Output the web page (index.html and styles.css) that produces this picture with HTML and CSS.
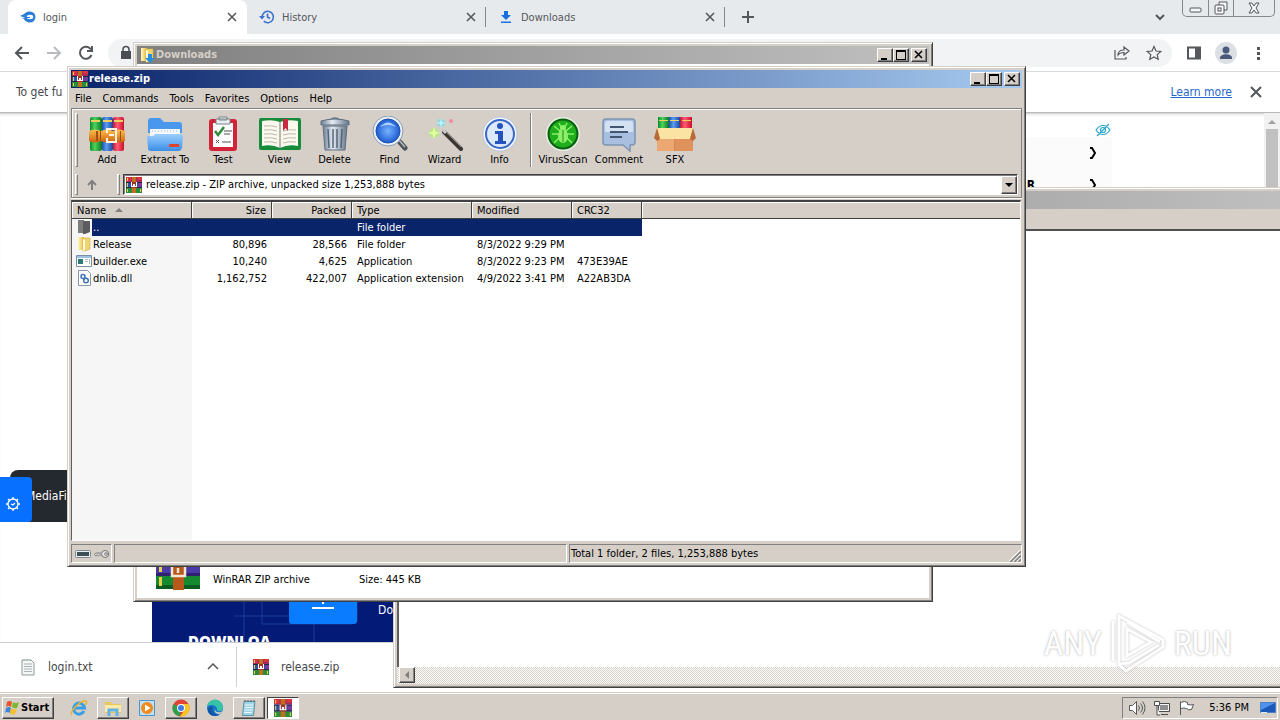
FILE: index.html
```html
<!DOCTYPE html>
<html lang="en">
<head>
    <meta charset="UTF-8">
    <meta name="viewport" content="width=device-width, initial-scale=1.0">
    <title>release.zip</title>
    <link rel="stylesheet" href="styles.css">
</head>
<body>
    <!-- Shared icons -->
    <svg class="defs" aria-hidden="true">
        <defs>
            <linearGradient id="book-green" x2="1" y2="0"><stop offset="0" stop-color="#0a8a2e"/><stop offset=".4" stop-color="#4fd35a"/><stop offset="1" stop-color="#08762a"/></linearGradient>
            <linearGradient id="book-blue" x2="1" y2="0"><stop offset="0" stop-color="#1d50b0"/><stop offset=".4" stop-color="#5c9df0"/><stop offset="1" stop-color="#1746a0"/></linearGradient>
            <linearGradient id="book-red" x2="1" y2="0"><stop offset="0" stop-color="#c31735"/><stop offset=".4" stop-color="#ff5c73"/><stop offset="1" stop-color="#c80f2c"/></linearGradient>
            <linearGradient id="belt" x2="0" y2="1"><stop offset="0" stop-color="#ffc04e"/><stop offset="1" stop-color="#cc6410"/></linearGradient>
            <linearGradient id="folder-blue" x2="0" y2="1"><stop offset="0" stop-color="#9ccffc"/><stop offset="1" stop-color="#3b8ee8"/></linearGradient>
            <linearGradient id="steel" x2="1" y2="0"><stop offset="0" stop-color="#6e7f93"/><stop offset=".4" stop-color="#e4ebf2"/><stop offset="1" stop-color="#66778b"/></linearGradient>
            <linearGradient id="paper" x2="1" y2="0"><stop offset="0" stop-color="#fff7c4"/><stop offset="1" stop-color="#e8b93a"/></linearGradient>
            <radialGradient id="lens"><stop offset="0" stop-color="#78b4ff"/><stop offset="1" stop-color="#1e5bd0"/></radialGradient>
            <symbol id="rar" viewBox="0 0 16 16">
                <path fill="#a82a5e" d="M0 0h16v5H0z"/><path fill="#d8323c" d="M0 0h5v4H0zM11 0h5v3h-5z"/>
                <path fill="#2f4fa8" d="M0 5h16v6H0z"/><path fill="#7a3a9c" d="M12 5h4v5h-4z"/>
                <path fill="#2c8a3c" d="M0 11h16v5H0z"/>
                <path fill="#222a44" d="M0 5h16v1H0zM0 10h16v1H0z"/>
                <path fill="#efd04a" d="M1 1h1v3H1zM1 6h1v4H1zM1 12h1v3H1zM14 12h1v3h-1z"/>
                <path fill="#c3701c" d="M6 0h4v5H6zM6 11h4v5H6z"/>
                <path fill="#9a3424" d="M5 5h6v6H5z"/>
                <path fill="#fff" d="M5 5h1v4h1V7h2v2h1V5h1v5H5z"/>
            </symbol>
            <symbol id="folder" viewBox="0 0 16 16">
                <path fill="url(#paper)" d="M2 1h6v13H2z"/>
                <path fill="#f1d472" stroke="#d4ac3c" stroke-width=".6" d="M7 2h7v11l-5 2H7z"/>
                <path fill="#fffbe0" d="M7 3l2 1v10l-2 1z"/>
            </symbol>
        </defs>
    </svg>

    <div class="desktop">
        <!-- Browser -->
        <div class="browser">
            <header class="tabstrip">
                <div class="tab active">
                    <svg class="favicon" viewBox="0 0 16 16"><path fill="#2a7fd6" d="M0 7c1-1 3-1 4-2 2-2 4-2.500 6-2.500a5.500 5.500 0 0 1 0 11c-3 0-5-1.500-6-3.500L1 9.500c2 0 3-.3 4-.8L0 7z"/><ellipse cx="10" cy="8" rx="3.200" ry="2.200" fill="#fff"/><path fill="#2a7fd6" d="M6 8h4a2 2 0 0 1 0 1H6z"/></svg>
                    <span>login</span>
                    <button class="icon-btn" aria-label="Close login"><svg viewBox="0 0 16 16"><path d="M4 4l8 8M12 4l-8 8"/></svg></button>
                </div>
                <div class="tab">
                    <svg class="favicon" viewBox="0 0 16 16"><path fill="none" stroke="#3b72cf" stroke-width="1.600" d="M3 8a5.700 5.700 0 1 1 1.800 4.200M8.500 4.500V8l2.500 1.500"/><path fill="#3b72cf" d="M0 7h6L3 10.500z"/></svg>
                    <span>History</span>
                    <button class="icon-btn" aria-label="Close History"><svg viewBox="0 0 16 16"><path d="M4 4l8 8M12 4l-8 8"/></svg></button>
                </div>
                <div class="tab">
                    <svg class="favicon" viewBox="0 0 16 16"><path fill="#1a6fe0" d="M6 2h4v4h3l-5 5-5-5h3zM3 12.500h10V14H3z"/></svg>
                    <span>Downloads</span>
                    <button class="icon-btn" aria-label="Close Downloads"><svg viewBox="0 0 16 16"><path d="M4 4l8 8M12 4l-8 8"/></svg></button>
                </div>
                <button class="icon-btn new-tab" aria-label="New tab"><svg viewBox="0 0 16 16"><path d="M8 2v12M2 8h12"/></svg></button>
                <button class="icon-btn tab-search" aria-label="Search tabs"><svg viewBox="0 0 16 16"><path d="M4 6l4 4 4-4"/></svg></button>
                <div class="caption">
                    <button aria-label="Minimize"><svg viewBox="0 0 20 16"><rect x="4" y="8" width="11" height="4" rx="1"/></svg></button>
                    <button aria-label="Restore"><svg viewBox="0 0 20 16"><path d="M8 5V2h8v8h-3"/><rect x="4" y="5" width="9" height="9" rx="1"/><rect x="7" y="8" width="3" height="3"/></svg></button>
                    <button class="wide" aria-label="Close"><svg viewBox="0 0 20 16"><path d="M5 3h3l2 3 2-3h3l-3 5 3 5h-3l-2-3-2 3H5l3-5z"/></svg></button>
                </div>
            </header>
            <div class="toolbar">
                <button class="icon-btn" aria-label="Back"><svg viewBox="0 0 16 16"><path d="M15 8H2M8 2L2 8l6 6"/></svg></button>
                <button class="icon-btn dim" aria-label="Forward"><svg viewBox="0 0 16 16"><path d="M1 8h13M8 2l6 6-6 6"/></svg></button>
                <button class="icon-btn" aria-label="Reload"><svg viewBox="0 0 16 16"><path d="M13.500 10A6 6 0 1 1 13 4.500M14 1v5H9"/></svg></button>
                <div class="omnibox">
                    <svg class="lock" viewBox="0 0 12 16"><path fill="#4a4d52" d="M1 6h10v8H1z"/><path fill="none" stroke="#4a4d52" stroke-width="1.500" d="M3 7V4.500a3 3 0 0 1 6 0V7"/></svg>
                    <input type="text" aria-label="Address">
                    <button class="icon-btn thin" aria-label="Share"><svg viewBox="0 0 16 16"><path d="M1 5v9h11v-2M4 10c0-4 3-5 6-5V2l5 4-5 4V7.500C7 7.500 5.500 8 4 10z"/></svg></button>
                    <button class="icon-btn thin" aria-label="Bookmark"><svg viewBox="0 0 16 16"><path d="M8 1.500l2 4.500 4.800.4-3.600 3.200 1 4.800L8 12l-4.200 2.400 1-4.800L1.200 6.400 6 6z"/></svg></button>
                </div>
                <button class="icon-btn" aria-label="Side panel"><svg viewBox="0 0 16 16"><path d="M2 2.500h12v11H2z"/><path fill="#54575b" stroke="none" d="M9 2h5v12H9z"/></svg></button>
                <button class="avatar" aria-label="Profile"><svg viewBox="0 0 22 22"><circle cx="11" cy="8" r="3.500"/><path d="M5 16c0-5 12-5 12 0v1H5z"/></svg></button>
                <button class="icon-btn" aria-label="Menu"><svg viewBox="0 0 16 16"><path fill="#54575b" stroke="none" d="M7 2h3v3H7zM7 7h3v3H7zM7 12h3v3H7z"/></svg></button>
            </div>
            <div class="infobar">
                <span>To get fu</span>
                <a href="#">Learn more</a>
                <button class="icon-btn" aria-label="Dismiss"><svg viewBox="0 0 16 16"><path d="M3 3l10 10M13 3L3 13"/></svg></button>
            </div>
            <main class="page">
                <div class="page-body">
                    <div class="sponsor">
                        <svg class="eye" viewBox="0 0 18 14"><path d="M2 7c4-6 10-6 14 0-4 6-10 6-14 0zM3 13L15 1"/><circle cx="9" cy="7" r="2.500"/></svg>
                        <div class="links">
                            <p><svg viewBox="0 0 8 12"><path d="M1 1h2l3 5-3 5H1"/></svg></p>
                            <p><b>R</b><svg viewBox="0 0 8 12"><path d="M1 1h2l3 5-3 5H1"/></svg></p>
                        </div>
                    </div>
                    <div class="banner">
                        <svg class="circuit" viewBox="0 0 241 60"><path d="M92 0v60M110 0v42h30M82 34h80l12-10V0M205 0v40M162 42v18M140 42h60"/></svg>
                        <svg class="download-box" viewBox="0 0 68 42"><rect width="68" height="42" rx="3"/><path d="M23 26h22M34 16v6"/></svg>
                        <b>DOWNLOA</b>
                        <span>Do</span>
                    </div>
                    <div class="toast">MediaFire</div>
                    <button class="feedback" aria-label="Settings"><svg viewBox="0 0 16 16"><circle cx="8" cy="8" r="5"/><path d="M8 1v2M8 13v2M1 8h2M13 8h2M3 3l2 2M11 11l2 2M13 3l-2 2M3 13l2-2M6 8l2 1 2-2"/></svg></button>
                </div>
                <div class="page-scroll"><svg viewBox="0 0 8 4"><path d="M0 4l4-4 4 4z"/></svg></div>
            </main>
            <footer class="shelf">
                <div class="shelf-item">
                    <svg viewBox="0 0 16 18"><path fill="#f5f7f7" stroke="#8f9a9a" d="M2 2h9l3 3v12H2z"/><path stroke="#a9b3b3" d="M4 6h8M4 8.500h8M4 11h8M4 13.500h8M4 1v2M7 1v2M10 1v2"/></svg>
                    <span>login.txt</span>
                    <button class="icon-btn" aria-label="login.txt options"><svg viewBox="0 0 16 16"><path d="M3 10l5-5 5 5"/></svg></button>
                </div>
                <div class="shelf-item">
                    <svg viewBox="0 0 16 16"><use href="#rar"/></svg>
                    <span>release.zip</span>
                </div>
            </footer>
        </div>

        <!-- Background window -->
        <section class="window win-back">
            <div class="titlebar inactive"></div>
            <div class="strip"></div>
            <div class="pane"></div>
            <div class="hscroll"><button aria-label="Scroll left"><svg viewBox="0 0 8 8"><path d="M6 0v8L2 4z"/></svg></button></div>
        </section>

        <!-- Explorer -->
        <section class="window win-downloads">
            <div class="titlebar inactive">
                <svg viewBox="0 0 16 16"><use href="#folder"/><path fill="#2a8fd8" d="M9 7h4v4h3l-5 5-5-5h3z"/></svg>
                <span>Downloads</span>
                <div class="controls">
                    <button aria-label="Minimize"><svg viewBox="0 0 12 10"><path d="M2 8h6v2H2z"/></svg></button>
                    <button aria-label="Maximize"><svg viewBox="0 0 12 10"><path fill-rule="evenodd" d="M1 0h10v10H1zM2 2v7h8V2z"/></svg></button>
                    <button class="close" aria-label="Close"><svg viewBox="0 0 12 10"><path class="cross" d="M2 1l7 7M9 1L2 8"/></svg></button>
                </div>
            </div>
            <div class="details">
                <svg viewBox="0 0 46 46">
                    <path fill="#b02048" d="M0 2h46v13H0z"/><path fill="#4a3aa8" d="M1 16h44v13H1z"/><path fill="#168a30" d="M1 30h44v13H1z"/>
                    <path fill="#302070" d="M1 27h44v3H1z"/><path fill="#0b5c20" d="M1 39h44v4H1z"/>
                    <path fill="#e8cf4a" d="M4 17h3v9H4zM4 31h3v9H4z"/>
                    <path fill="#b8591c" d="M18 0h11v44H18z"/><path fill="none" stroke="#f3e6d4" stroke-width="2.500" d="M17 18h13v12H17zM23 22v5"/>
                </svg>
                <span>WinRAR ZIP archive</span>
                <span>Size: 445 KB</span>
            </div>
        </section>

        <!-- WinRAR -->
        <section class="window win-rar">
            <div class="titlebar">
                <svg viewBox="0 0 16 16"><use href="#rar"/></svg>
                <span>release.zip</span>
                <div class="controls">
                    <button aria-label="Minimize"><svg viewBox="0 0 12 10"><path d="M2 8h6v2H2z"/></svg></button>
                    <button aria-label="Maximize"><svg viewBox="0 0 12 10"><path fill-rule="evenodd" d="M1 0h10v10H1zM2 2v7h8V2z"/></svg></button>
                    <button class="close" aria-label="Close"><svg viewBox="0 0 12 10"><path class="cross" d="M2 1l7 7M9 1L2 8"/></svg></button>
                </div>
            </div>
            <nav class="menubar">
                <button>File</button>
                <button>Commands</button>
                <button>Tools</button>
                <button>Favorites</button>
                <button>Options</button>
                <button>Help</button>
            </nav>
            <div class="rebar">
                <div class="tools">
                    <i class="grip"></i>
                    <button class="wide">
                        <svg viewBox="0 0 36 36"><rect x="1" y="1" width="12" height="34" rx="2" fill="url(#book-green)"/><rect x="13" y="1" width="11" height="34" rx="2" fill="url(#book-blue)"/><rect x="24" y="1" width="11" height="34" rx="2" fill="url(#book-red)"/><path fill="#f0d060" d="M2 4h9v2H2zM14 4h9v2h-9zM25 4h9v2h-9z"/><path fill="url(#belt)" d="M0 15q6-3 12 0 6-3 12 0 6-3 12 0v10q-6 3-12 0-6 3-12 0-6 3-12 0z"/><path fill="#a3500c" d="M7 15h2v10H7zM11 15h1v10h-1zM31 15h1v10h-1z"/><path fill="none" stroke="#fff3e0" stroke-width="2" d="M18 17v-4h9v13h-9v-4M20 19h5"/></svg>
                        Add
                    </button>
                    <button class="wide">
                        <svg viewBox="0 0 36 36"><path fill="#4a98ee" d="M1 5q0-3 3-3h9l4 4h15q3 0 3 3v8H1z"/><path fill="#f4f8fc" d="M3 13h30v10H3z"/><path stroke="#9fb6cf" stroke-dasharray="1 2" d="M5 15h27"/><path fill="url(#folder-blue)" d="M0 20h5q2 0 3-2h25q3 0 3 3l-1 11q-1 3-3 3H4q-3 0-3-3z"/><path fill="#e0432c" d="M22 28h10v3H22z"/></svg>
                        Extract To
                    </button>
                    <button class="wide">
                        <svg viewBox="0 0 36 36"><rect x="4" y="3" width="28" height="32" rx="3" fill="#d32339"/><path fill="#fbfbfb" d="M8 7h20v24H8z"/><path fill="#e9eef0" stroke="#7c8488" d="M11 3h14v5H11zM14 1h8v3h-8z"/><path fill="none" stroke="#2d8c3a" stroke-width="2.500" d="M10 15l3 4 6-8"/><path fill="none" stroke="#555" d="M19 15h8M19 18h6M11 24l3 3M14 24l-3 3M17 26h9"/></svg>
                        Test
                    </button>
                    <button>
                        <svg class="book" viewBox="0 0 42 36"><path fill="#178a3c" d="M0 4q0-2 2-2h38q2 0 2 2v28q0 2-2 2H2q-2 0-2-2z"/><path fill="#fbf8ee" d="M3 5q10-2 18 1 8-3 18-1v25q-10-2-18 2-8-4-18-2z"/><path stroke="#b9b9ae" fill="none" d="M5 10q7-1 13 1M5 14q7-1 13 1M5 18q7-1 13 1M5 22q7-1 13 1M5 26q7-1 13 1M24 15q6-2 13-1M24 19q6-2 13-1M24 23q6-2 13-1M24 27q6-2 13-1"/><path stroke="#777" d="M21 6v26"/><path fill="#c9283e" d="M24 3h5v12l-2.500-3L24 15z"/></svg>
                        View
                    </button>
                    <button>
                        <svg viewBox="0 0 36 36"><path fill="none" stroke="#6a7888" stroke-width="1.500" d="M13 4q5-4 10 0"/><path fill="url(#steel)" stroke="#5f6f80" d="M4 5q14-4 28 0v4H4z"/><path fill="url(#steel)" stroke="#5f6f80" d="M6 10h24l-2 24H8z"/><path stroke="#54657a" stroke-width="1.500" d="M11 13l1 19M16 13v19M20 13v19M25 13l-1 19"/></svg>
                        Delete
                    </button>
                    <button>
                        <svg viewBox="0 0 36 36"><path stroke="#4c5359" stroke-width="5" stroke-linecap="round" d="M26 24l7 8"/><path stroke="#b6bdc3" stroke-width="1.500" d="M26 23l7 8"/><path stroke="#2a9a3c" stroke-width="3" d="M23 25l3-3"/><circle cx="16" cy="15" r="15" fill="#e9eff6" stroke="#8a9bb0"/><circle cx="16" cy="15" r="12" fill="url(#lens)" stroke="#1c4faf"/><path fill="#a9d0ff" d="M8 11q8-9 16 0-8-4-16 0z"/></svg>
                        Find
                    </button>
                    <button>
                        <svg viewBox="0 0 36 36"><path stroke="#3a3634" stroke-width="4" stroke-linecap="round" d="M17 16l17 17"/><path stroke="#c9c9c9" stroke-width="3" d="M16 14l3 3"/><path stroke="#8d8884" d="M20 17l14 14"/><circle cx="7" cy="17" r="5" fill="#a8f070" opacity=".6"/><path fill="#e2ff9c" d="M7 11l1.500 4.500L13 17l-4.500 1.500L7 23l-1.500-4.500L1 17l4.500-1.500z"/><circle cx="14" cy="7" r="4" fill="#6fd8ee" opacity=".6"/><path fill="#b8f6ff" d="M14 2l1 4 4 1-4 1-1 4-1-4-4-1 4-1z"/><circle cx="24" cy="5" r="2" fill="#f08a9c"/></svg>
                        Wizard
                    </button>
                    <button>
                        <svg viewBox="0 0 36 36"><circle cx="18" cy="18" r="17" fill="#f4f8ff" stroke="#b9c8dc"/><circle cx="18" cy="18" r="14" fill="#dce8fb" stroke="#3a66c4" stroke-width="2"/><circle cx="18" cy="10" r="3" fill="#2453be"/><path fill="#2453be" d="M13 15h8v10h3v3H13v-3h3v-7h-3z"/></svg>
                        Info
                    </button>
                    <i class="divider"></i>
                    <button class="mid">
                        <svg viewBox="0 0 36 36"><circle cx="18" cy="18" r="16" fill="#1fae1c" stroke="#e6f2e2" stroke-width="2"/><circle cx="18" cy="18" r="14.500" fill="none" stroke="#0c5f12" stroke-width="2"/><path stroke="#8df06a" stroke-width="1.500" fill="none" d="M9 10l6 5M27 10l-6 5M7 18h22M9 27l6-6M27 27l-6-6M14 7l2 4M22 7l-2 4"/><ellipse cx="18" cy="20" rx="5" ry="7" fill="#8df06a"/><circle cx="18" cy="12" r="3" fill="#8df06a"/><path stroke="#1a8c18" d="M18 14v12"/></svg>
                        VirusScan
                    </button>
                    <button class="mid">
                        <svg viewBox="0 0 36 36"><path fill="#a9bfdf" stroke="#7d94b3" stroke-width="1.500" d="M5 3h26q3 0 3 3v20q0 3-3 3h-2v6l-7-6H5q-3 0-3-3V6q0-3 3-3z"/><path fill="#d4e1f3" d="M6 5h24q2 0 2 3v8H4V8q0-3 2-3z"/><path stroke="#43556f" stroke-width="2" d="M9 11h14M9 16h18M9 21h12"/></svg>
                        Comment
                    </button>
                    <button class="mid">
                        <svg class="book" viewBox="0 0 42 36"><path fill="url(#book-green)" d="M4 1h11v13H4z"/><path fill="url(#book-blue)" d="M15 1h11v13H15z"/><path fill="url(#book-red)" d="M26 1h12v13H26z"/><path fill="#f0d060" d="M5 4h9v1H5zM16 4h9v1h-9zM28 4h9v1h-9z"/><path fill="#d98a50" d="M3 12h36v23H3z"/><path fill="#eba873" d="M3 22h17v13H3z"/><path fill="#e0925c" d="M21 22h18v13H21z"/><path fill="#fbe3a4" d="M3 12h36l-3 11H6z"/><path fill="#b96a3a" d="M3 12L0 22l3 3 3-2zM39 12l3 10-3 3-3-2z"/></svg>
                        SFX
                    </button>
                </div>
                <div class="address">
                    <i class="grip"></i>
                    <button class="up" aria-label="Up one level"><svg viewBox="0 0 12 12"><path d="M6 11V2M2 6l4-4 4 4"/></svg></button>
                    <i class="grip"></i>
                    <div class="combo">
                        <svg viewBox="0 0 16 16"><use href="#rar"/></svg>
                        <select aria-label="Archive path">
                            <option>release.zip - ZIP archive, unpacked size 1,253,888 bytes</option>
                        </select>
                        <span class="drop"></span>
                    </div>
                </div>
            </div>
            <div class="listview">
                <table>
                    <thead>
                        <tr>
                            <th class="c-name">Name <i class="sort"></i></th>
                            <th class="c-num">Size</th>
                            <th class="c-num">Packed</th>
                            <th class="c-type">Type</th>
                            <th class="c-date">Modified</th>
                            <th class="c-crc">CRC32</th>
                            <th class="c-rest"></th>
                        </tr>
                    </thead>
                    <tbody>
                        <tr class="selected">
                            <td><svg viewBox="0 0 16 16"><path fill="#7d7d7d" d="M2 1h6v13H2z"/><path fill="#5c5c5c" d="M7 2h7v11l-5 2H7z"/></svg><span>..</span></td>
                            <td></td><td></td><td>File folder</td><td></td><td></td><td></td>
                        </tr>
                        <tr>
                            <td><svg viewBox="0 0 16 16"><use href="#folder"/></svg><span>Release</span></td>
                            <td>80,896</td><td>28,566</td><td>File folder</td><td>8/3/2022 9:29 PM</td><td></td><td></td>
                        </tr>
                        <tr>
                            <td><svg viewBox="0 0 16 16"><path fill="#fff" stroke="#7a8ea6" d="M.5 2.500h15v11H.5z"/><path fill="#9fc0e4" d="M1 3h14v2H1z"/><path fill="#2b7a78" d="M2 6h5v5H2z"/><path fill="#b6bcc6" d="M9 6h3v1H9zM9 8h3v1H9zM13 6h1v5h-1z"/></svg><span>builder.exe</span></td>
                            <td>10,240</td><td>4,625</td><td>Application</td><td>8/3/2022 9:23 PM</td><td>473E39AE</td><td></td>
                        </tr>
                        <tr>
                            <td><svg viewBox="0 0 16 16"><path fill="#fdfdfd" stroke="#8a97a6" d="M2.500.5h9l3 3v12h-12z"/><circle cx="7" cy="6.500" r="2" fill="none" stroke="#3f72b8" stroke-width="1.500"/><circle cx="10" cy="10.500" r="2.300" fill="none" stroke="#3f72b8" stroke-width="1.500"/></svg><span>dnlib.dll</span></td>
                            <td>1,162,752</td><td>422,007</td><td>Application extension</td><td>4/9/2022 3:41 PM</td><td>A22AB3DA</td><td></td>
                        </tr>
                    </tbody>
                </table>
            </div>
            <div class="statusbar">
                <div class="cell icons">
                    <svg viewBox="0 0 16 8"><rect x=".5" y="0.500" width="15" height="7" rx="1" fill="#e8eef0" stroke="#7f8a8c"/><path fill="#3d5054" d="M2 2h12v4H2z"/></svg>
                    <svg viewBox="0 0 18 10"><circle cx="12.500" cy="5" r="4" fill="#e6e6e6" stroke="#66666a"/><circle cx="13.500" cy="5" r="1.500" fill="#fff" stroke="#66666a"/><path fill="#e6e6e6" stroke="#66666a" d="M8.500 4H2L.5 5.500 2 7l1.500-1L5 7l1.500-1h2"/></svg>
                </div>
                <div class="cell"></div>
                <div class="cell">Total 1 folder, 2 files, 1,253,888 bytes</div>
                <svg class="resize" viewBox="0 0 12 12"><path stroke="#fff" d="M0 11L11 0M4 11l7-7M8 11l3-3"/><path stroke="#808080" stroke-width="1.500" d="M1.500 12L12 1.500M5.500 12L12 5.500M9.500 12L12 9.500"/></svg>
            </div>
        </section>

        <!-- Watermark -->
        <div class="watermark">
            <span>ANY</span>
            <svg viewBox="0 0 60 62"><path d="M5 9v40M11 4l44 24v7L18 59l-7-6z"/><path d="M19 17v27l24-14z"/><path d="M19 10l33 20M11 52l10-1 30-18"/></svg>
            <span>RUN</span>
        </div>
    </div>

    <!-- Taskbar -->
    <footer class="taskbar">
        <button class="start">
            <svg viewBox="0 0 16 16"><path fill="#e8542c" d="M3 2q3-2 5 0L7 7Q4 5 2 7z"/><path fill="#7cb82f" d="M9 2q3 2 6 0l-2 6q-3 1-5-1z"/><path fill="#3a86dc" d="M2 8q3-2 5 0l-1 5q-3-2-5 0z"/><path fill="#f7c02c" d="M7 8q3 2 6 1l-2 5q-3 2-5-1z"/></svg>
            Start
        </button>
        <div class="tasks">
            <button aria-label="Internet Explorer"><svg viewBox="0 0 18 18"><path fill="none" stroke="#3aa0e4" stroke-width="3" d="M14 12a5.500 5.500 0 1 1 .5-3H5"/><path fill="none" stroke="#e8b52c" stroke-width="1.500" d="M2 16C-1 13 10 1 16 2c1.500 1 0 3-1 4"/></svg></button>
            <button class="running" aria-label="Explorer"><svg viewBox="0 0 18 18"><path fill="#e9c65a" d="M1 3h6l1 2h9v9H1z"/><path fill="#fbe9a6" d="M1 6h16v7H1z"/><path fill="none" stroke="#62b2e8" stroke-width="3" d="M5 17v-6h8v6"/></svg></button>
            <button aria-label="Media Player"><svg viewBox="0 0 18 18"><path fill="#bfe0f6" stroke="#4f94c8" d="M1.500 1.500h15v15h-15z"/><circle cx="9" cy="9" r="6" fill="#f08a1c"/><path fill="#fff" d="M7 5.500v7L12.500 9z"/></svg></button>
            <button class="running" aria-label="Chrome"><svg viewBox="0 0 18 18"><circle cx="9" cy="9" r="8.500" fill="#e04434"/><path fill="#2f9f4c" d="M1.500 5L9 9l-1.500 8.400A8.500 8.500 0 0 1 1.500 5z"/><path fill="#f9c520" d="M9 5h7.500a8.500 8.500 0 0 1-8.500 12.500L12.500 11z"/><circle cx="9" cy="9" r="4" fill="#fff"/><circle cx="9" cy="9" r="3" fill="#3b7ee8"/></svg></button>
            <button aria-label="Edge"><svg viewBox="0 0 18 18"><circle cx="9" cy="9" r="8" fill="#1673c8"/><path fill="#36c3a8" d="M1 8a8 8 0 0 1 16 1c0 4-5 4-6 2 1-4-6-7-10-3z"/><path fill="#d4cfc8" d="M9 10c0 4 5 4 8 2l-3 3c-4 0-6-2-5-5z"/><path fill="#0f56a4" d="M7 8c-2 4 1 8 6 8-6 3-12-1-11-6 1-2 3-3 5-2z"/></svg></button>
            <button class="running" aria-label="Notepad"><svg viewBox="0 0 18 18"><path fill="#9fd4e4" stroke="#5d93a4" d="M4 2.500h11l-1.500 14H2.500z"/><path stroke="#e9f6fa" d="M5 6h8M5 8.500h8M4.500 11h8M4 13.500h8"/><path stroke="#556" d="M5 1v2M8 1v2M11 1v2M14 1v2"/></svg></button>
            <button class="current" aria-label="WinRAR"><svg viewBox="0 0 16 16"><use href="#rar"/></svg></button>
        </div>
        <div class="tray">
            <svg viewBox="0 0 18 16"><path fill="#fff" stroke="#55565a" d="M1.500 5.500h3l4-4v13l-4-4h-3z"/><path fill="none" stroke="#55565a" d="M10.500 5.500q2 2.500 0 5M12.500 3.500q4 4.500 0 9M14.500 1.500q5 6 0 13"/></svg>
            <svg viewBox="0 0 18 16"><path fill="#f4f4f4" stroke="#4d4d50" d="M5.500 3.500h11v8h-11zM8 14.500h7"/><path fill="#8d8d92" d="M7 5h8v5H7z"/><path fill="#fff" stroke="#4d4d50" d="M1.500 1.500h5v4h-5zM4 6v9h3"/></svg>
            <svg viewBox="0 0 18 16"><path fill="#fff" stroke="#55565a" d="M2.500 15V1.500M2.500 2.500q4-2 7 0v2q3 1 6 0l-2 5q-3 1-5-1-3-1-6 0z"/></svg>
            <time>5:36 PM</time>
            <svg viewBox="0 0 18 16"><path fill="#1b58b8" stroke="#4d7fc4" d="M1.500 2.500h15v10h-15z"/><path fill="#4f94ea" d="M2 3h14L2 10z"/><path fill="#e0eaf6" d="M2 12h6v1H2z"/></svg>
        </div>
    </footer>
</body>
</html>
```
FILE: styles.css
```css
* {
    box-sizing: border-box;
}

body {
    margin: 0;
    height: 100vh;
    display: flex;
    flex-direction: column;
    overflow: hidden;
    font-family: "DejaVu Sans Condensed", Tahoma, "DejaVu Sans", sans-serif;
    font-size: 11px;
    line-height: 16px;
    color: #000;
    background: #fff;
}

button, input, select {
    font: inherit;
    color: inherit;
    margin: 0;
    padding: 0;
    border: 0;
    background: none;
}

p {
    margin: 0;
}

svg {
    display: block;
    flex: none;
}

.defs {
    position: absolute;
    width: 0;
    height: 0;
}

.desktop {
    position: relative;
    flex: 1;
    min-height: 0;
    overflow: hidden;
}

/* Browser */
.browser {
    height: 100%;
    display: flex;
    flex-direction: column;
    color: #54575b;
}

.icon-btn {
    width: 16px;
    height: 16px;
    flex: none;
}

.icon-btn svg {
    width: 16px;
    height: 16px;
    fill: none;
    stroke: #54575b;
    stroke-width: 2;
}

.icon-btn.dim svg {
    stroke: #b9bbbe;
}

.icon-btn.thin svg {
    stroke-width: 1.2;
}

.tabstrip {
    display: flex;
    align-items: center;
    height: 34px;
    padding: 0 5px 0 8px;
    background: #e7eaed;
}

.tab {
    display: flex;
    align-items: center;
    gap: 7px;
    width: 239px;
    height: 34px;
    padding: 0 7px 0 12px;
}

.tab span {
    flex: 1;
    padding-top: 1px;
}

.tab.active {
    background: #fff;
    border-radius: 8px 8px 0 0;
}

.tab + .tab {
    background: linear-gradient(#85888c, #85888c) right center / 1px 20px no-repeat;
}

.favicon {
    width: 16px;
    height: 16px;
}

.tab .icon-btn svg {
    stroke-width: 1.6;
}

.new-tab {
    margin-left: 15px;
}

.tab-search {
    margin-left: auto;
    margin-right: 14px;
}

.caption {
    display: flex;
    align-self: flex-start;
    border: 1px solid #85888c;
    border-top: 0;
    border-radius: 0 0 5px 5px;
}

.caption button {
    width: 25px;
    height: 16px;
    display: flex;
    justify-content: center;
}

.caption button + button {
    border-left: 1px solid #85888c;
}

.caption .wide {
    width: 41px;
}

.caption svg {
    width: 20px;
    height: 16px;
    fill: #f6f7f8;
    stroke: #54575b;
}

.toolbar {
    display: flex;
    align-items: center;
    gap: 16px;
    height: 38px;
    padding: 0 14px;
    border-bottom: 1px solid #d8dadd;
    background: #fff;
}

.omnibox {
    flex: 1;
    display: flex;
    align-items: center;
    gap: 16px;
    height: 28px;
    margin: 0 -2px 0 -2px;
    padding: 0 10px 0 12px;
    border-radius: 14px;
    background: #f1f3f4;
}

.omnibox input {
    flex: 1;
    outline: 0;
}

.lock {
    width: 12px;
    height: 16px;
}

.avatar {
    width: 22px;
    height: 22px;
    margin: 0 -3px;
    border-radius: 50%;
    background: #dcdfe4;
}

.avatar svg {
    width: 22px;
    height: 22px;
    fill: #4b5a7c;
}

.infobar {
    display: flex;
    align-items: center;
    gap: 16px;
    height: 41px;
    padding: 0 16px;
    font-size: 12px;
    color: #45484c;
    border-bottom: 1px solid #b8babc;
    background: #fff;
}

.infobar a {
    margin-left: auto;
    color: #2468c8;
}

.page {
    flex: 1;
    min-height: 0;
    display: flex;
    box-shadow: inset 0 3px 3px -2px #c4c4c4;
}

.page-body {
    position: relative;
    flex: 1;
    display: flex;
    flex-direction: column;
    justify-content: space-between;
}

.sponsor {
    align-self: flex-end;
    width: 110px;
    margin-right: 152px;
    padding-top: 10px;
}

.eye {
    width: 18px;
    height: 14px;
    margin-left: auto;
    fill: none;
    stroke: #2aa6cc;
    stroke-width: 1.2;
}

.links {
    background: #fbfbfb;
}

.links p {
    display: flex;
    align-items: center;
    justify-content: flex-end;
    gap: 54px;
    height: 32px;
    padding-right: 15px;
    font-size: 12px;
    color: #000;
}

.links svg {
    width: 8px;
    height: 12px;
    fill: none;
    stroke: #000;
    stroke-width: 2;
}

.banner {
    position: relative;
    display: flex;
    align-items: flex-start;
    height: 60px;
    width: 241px;
    margin-left: 152px;
    overflow: hidden;
    color: #fff;
    background: #031a76;
}

.banner .circuit {
    position: absolute;
    inset: 0;
    width: 241px;
    height: 60px;
    fill: none;
    stroke: #1c3c9c;
}

.download-box {
    position: absolute;
    left: 137px;
    width: 68px;
    height: 42px;
    fill: #0a7cff;
    stroke: #fff;
    stroke-width: 2;
}

.download-box rect {
    stroke: none;
}

.banner b {
    margin: 51px 0 0 36px;
    font-family: "Open Sans", sans-serif;
    font-size: 15px;
    font-weight: 800;
}

.banner span {
    margin: 20px 0 0 auto;
    font-size: 12px;
}

.toast {
    position: absolute;
    left: 10px;
    bottom: 120px;
    width: 200px;
    height: 52px;
    padding: 18px 16px;
    border-radius: 8px;
    font-size: 12px;
    color: #fff;
    background: #24282f;
}

.feedback {
    position: absolute;
    left: 0;
    bottom: 120px;
    width: 32px;
    height: 45px;
    padding: 8px 0 0 5px;
    border-radius: 0 4px 4px 0;
    background: #0870ff;
}

.feedback svg {
    width: 16px;
    height: 16px;
    fill: none;
    stroke: #fff;
    stroke-width: 1.3;
}

.page-scroll {
    width: 16px;
    padding-top: 7px;
    background: linear-gradient(#c1c1c1, #c1c1c1) center 16px / 12px 100% no-repeat #f1f1f1;
}

.page-scroll svg {
    width: 8px;
    height: 4px;
    margin: 0 auto;
    fill: #a0a0a0;
}

.shelf {
    display: flex;
    align-items: center;
    height: 50px;
    padding-bottom: 2px;
    font-size: 12px;
    border-top: 1px solid #cdd0d3;
    background: #fff;
    color: #45484c;
}

.shelf-item {
    display: flex;
    align-items: center;
    gap: 12px;
    width: 236px;
    height: 40px;
    padding: 0 15px 0 20px;
}

.shelf-item + .shelf-item {
    padding-left: 16px;
    border-left: 1px solid #d0d3d6;
}

.shelf-item > svg {
    width: 16px;
    height: 18px;
}

.shelf-item .icon-btn {
    margin-left: auto;
}

.shelf-item .icon-btn svg {
    stroke-width: 1.5;
}

/* Windows */
.window {
    position: absolute;
    display: flex;
    flex-direction: column;
    padding: 3px;
    border: 1px solid;
    border-color: #d5cfc8 #404040 #404040 #d5cfc8;
    box-shadow: inset 1px 1px #fff, inset -1px -1px #808080;
    background: #d5cfc8;
}

.win-back {
    inset: 187px -21px 4px 393px;
}

.win-downloads {
    inset: 42px 347px 90px 133px;
}

.win-rar {
    inset: 66px 254px 125px 67px;
}

.titlebar {
    display: flex;
    align-items: center;
    gap: 1px;
    height: 18px;
    padding: 0 2px 0 1px;
    font-weight: bold;
    color: #fff;
    background: linear-gradient(to right, #0a246a, #a6caf0);
}

.titlebar.inactive {
    color: #d5cfc8;
    background: linear-gradient(to right, #808080, #c0c0c0);
}

.titlebar > svg {
    width: 16px;
    height: 16px;
}

.win-downloads .titlebar {
    padding-left: 2px;
}

.controls {
    display: flex;
    margin-left: auto;
}

.controls button,
.hscroll button,
.drop {
    border: 1px solid;
    border-color: #fff #404040 #404040 #fff;
    box-shadow: inset -1px -1px #808080;
    background: #d5cfc8;
}

.controls button {
    width: 16px;
    height: 14px;
    padding: 1px;
}

.controls .close {
    margin-left: 2px;
}

.controls svg {
    width: 12px;
    height: 10px;
}

.cross {
    stroke: #000;
    stroke-width: 1.5;
}

.strip {
    height: 22px;
    border-bottom: 2px solid #505050;
}

.pane {
    flex: 1;
    border-left: 2px solid #606060;
    background: #fff;
}

.hscroll {
    height: 17px;
    padding-left: 2px;
    background: repeating-conic-gradient(#fff 0 25%, #d5cfc8 0 50%) 0 0 / 2px 2px;
}

.hscroll button {
    width: 16px;
    height: 16px;
    padding: 3px;
}

.hscroll svg {
    width: 8px;
    height: 8px;
    fill: #808080;
}

.details {
    flex: 1;
    display: flex;
    align-items: flex-end;
    padding: 0 17px 6px 18px;
    background: #fff;
}

.details svg {
    width: 46px;
    height: 46px;
}

.details span {
    width: 146px;
    padding: 0 0 4px 12px;
}

/* Menu and toolbars */
.menubar {
    display: flex;
    height: 20px;
    padding: 1px 0 0 4px;
    gap: 11px;
}

.rebar {
    border: 1px solid #808080;
    box-shadow: inset 1px 1px #fff, 0 1px #fff;
}

.tools {
    display: flex;
    height: 62px;
    padding: 4px 0 4px 3px;
}

.grip {
    width: 3px;
    border: 1px solid;
    border-color: #fff #808080 #808080 #fff;
}

.tools button {
    display: flex;
    flex-direction: column;
    align-items: center;
    width: 55px;
    padding-top: 3px;
    white-space: nowrap;
}

.tools .wide {
    width: 58px;
}

.tools .mid {
    width: 56px;
}

.tools svg {
    width: 36px;
    height: 36px;
}

.tools .book {
    width: 42px;
}

.divider {
    width: 2px;
    margin: 0 3px;
    border-left: 1px solid #808080;
    border-right: 1px solid #fff;
}

.address {
    display: flex;
    height: 26px;
    padding: 3px 3px 2px 3px;
}

.up {
    width: 39px;
    padding-left: 8px;
}

.up svg {
    width: 12px;
    height: 12px;
    fill: none;
    stroke: #808080;
    stroke-width: 2;
}

.combo {
    position: relative;
    flex: 1;
    display: flex;
    align-items: center;
    gap: 4px;
    margin-left: 3px;
    border: 1px solid;
    border-color: #404040 #fff #fff #404040;
    box-shadow: inset 1px 1px #808080;
    background: #fff;
}

.combo svg {
    width: 16px;
    height: 16px;
    margin-left: 2px;
}

.combo select {
    flex: 1;
    appearance: none;
    outline: 0;
}

.drop {
    position: absolute;
    right: 0;
    top: 1px;
    bottom: 0;
    width: 16px;
    pointer-events: none;
}

.drop::after {
    content: "";
    position: absolute;
    left: 3px;
    top: 6px;
    border: 4px solid transparent;
    border-top-color: #000;
    border-bottom: 0;
}

/* File list */
.listview {
    flex: 1;
    min-height: 0;
    margin: 2px 1px 0 0;
    border: 1px solid;
    border-color: #404040 #fff #fff #606060;
    border-top-width: 2px;
    background: linear-gradient(to right, #f6f6f6 120px, #fff 120px);
}

table {
    width: 100%;
    table-layout: fixed;
    border-collapse: separate;
    border-spacing: 0;
}

th {
    height: 17px;
    padding: 1px 5px 0;
    font-weight: normal;
    line-height: 15px;
    text-align: left;
    border-right: 1px solid #404040;
    border-bottom: 1px solid #404040;
    box-shadow: inset 1px 1px #fff;
    background: #d5cfc8;
}

.c-name { width: 120px; }
.c-num { width: 80px; }
.c-type { width: 120px; }
.c-date { width: 100px; }
.c-crc { width: 70px; }

.c-rest {
    border-right: 0;
}

th:nth-child(2), th:nth-child(3),
td:nth-child(2), td:nth-child(3) {
    text-align: right;
}

.sort {
    display: inline-block;
    margin: 0 0 2px 6px;
    border: 4px solid transparent;
    border-top: 0;
    border-bottom-color: #808080;
}

td {
    height: 17px;
    padding: 1px 5px 0;
    line-height: 16px;
    white-space: nowrap;
}

td:first-child {
    display: flex;
    padding: 0 0 0 4px;
}

td svg {
    width: 16px;
    height: 16px;
}

td span {
    flex: 1;
    padding: 1px 0 0 1px;
}

.selected {
    color: #fff;
}

.selected span,
.selected td:not(:first-child):not(:last-child) {
    background: #0a246a;
}

.statusbar {
    display: flex;
    gap: 2px;
    height: 22px;
    padding-top: 3px;
    position: relative;
}

.cell {
    flex: 1;
    padding: 1px 0 0 1px;
    border: 1px solid;
    border-color: #808080 #fff #fff #808080;
}

.cell.icons {
    flex: none;
    display: flex;
    align-items: center;
    gap: 3px;
    width: 41px;
    padding: 0 0 0 3px;
}

.icons svg {
    width: 16px;
    height: 10px;
}

.resize {
    position: absolute;
    right: 1px;
    bottom: 1px;
    width: 12px;
    height: 12px;
}

.watermark {
    position: absolute;
    right: 48px;
    bottom: 18px;
    display: flex;
    align-items: center;
    gap: 6px;
    font-family: "Liberation Sans Narrow", "Roboto Condensed", "Open Sans Condensed", "Roboto", sans-serif;
    font-size: 34px;
    line-height: 62px;
    color: #fff;
    text-shadow: 0 0 3px #bbb, 0 0 1px #ccc;
}

.watermark svg {
    width: 60px;
    height: 62px;
    fill: none;
    stroke: #fff;
    stroke-width: 3;
    filter: drop-shadow(0 0 1px #bbb);
}

/* Taskbar */
.taskbar {
    display: flex;
    align-items: center;
    height: 28px;
    padding: 2px 2px 0;
    border-top: 1px solid #d5cfc8;
    box-shadow: inset 0 1px #fff;
    background: #d5cfc8;
}

.start,
.tasks .running {
    border: 1px solid;
    border-color: #fff #404040 #404040 #fff;
    box-shadow: inset -1px -1px #808080;
}

.start {
    display: flex;
    align-items: center;
    gap: 1px;
    width: 52px;
    height: 22px;
    padding-left: 1px;
    font-weight: bold;
}

.start svg {
    width: 16px;
    height: 16px;
}

.tasks {
    display: flex;
    gap: 2px;
    margin-left: 9px;
}

.tasks button {
    display: flex;
    align-items: center;
    justify-content: center;
    width: 32px;
    height: 22px;
}

.tasks svg {
    width: 18px;
    height: 18px;
}

.tasks .current {
    border: 1px solid;
    border-color: #404040 #fff #fff #404040;
    background: #fff;
}

.tray {
    display: flex;
    align-items: center;
    gap: 7px;
    height: 22px;
    margin-left: auto;
    padding: 0 0 0 5px;
    border: 1px solid;
    border-color: #808080 #fff #fff #808080;
}

.tray svg {
    width: 18px;
    height: 16px;
}

.tray time {
    margin: 0 3px 0 6px;
}
```
